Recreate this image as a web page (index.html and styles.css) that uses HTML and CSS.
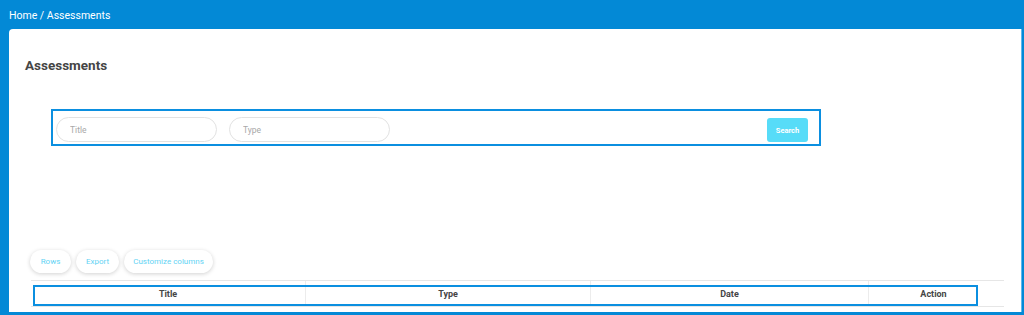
FILE: index.html
```html
<!DOCTYPE html>
<html>
<head>
<meta charset="utf-8">
<link rel="stylesheet" href="styles.css">
</head>
<body>
<div class="topbar">Home / Assessments</div>
<div class="card">
  <h1 class="title">Assessments</h1>
  <form class="search">
    <input class="field" type="text" placeholder="Title">
    <input class="field" type="text" placeholder="Type">
    <span class="spacer"></span>
    <button class="search-btn" type="button">Search</button>
  </form>
  <div class="toolbar">
    <button class="tool" type="button">Rows</button>
    <button class="tool" type="button">Export</button>
    <button class="tool" type="button">Customize columns</button>
  </div>
  <div class="table">
    <div class="thead">
      <div class="th c1">Title</div>
      <div class="th c2">Type</div>
      <div class="th c3">Date</div>
      <div class="th c4">Action</div>
    </div>
    <div class="highlight"></div>
  </div>
</div>
</body>
</html>
```

FILE: styles.css
```css
* { box-sizing: border-box; }
html, body { margin: 0; padding: 0; }
body {
  background: #0389d6;
  font-family: Roboto, "Liberation Sans", Arial, sans-serif;
  height: 315px;
  overflow: hidden;
}
.topbar {
  height: 29px;
  padding: 9px 0 0 9px;
  color: #ffffff;
  font-size: 10.5px;
  line-height: 13px;
}
.card {
  margin: 0 2px 0 9px;
  height: 283px;
  background: #ffffff;
  border-top-left-radius: 4px;
  border-right: 1px solid #5cb8ee;
  padding: 28px 0 0 0;
}
.title {
  margin: 0 0 0 16px;
  font-size: 13.5px;
  line-height: 17px;
  font-weight: 700;
  color: #454545;
}
.search {
  display: flex;
  align-items: flex-start;
  margin: 35px 0 0 42px;
  width: 770px;
  height: 37px;
  border: 2px solid #0b8fe0;
  padding: 6px 11px 0 3px;
}
.field {
  width: 161px;
  height: 25px;
  border: 1px solid #e2e2e2;
  border-radius: 13px;
  padding: 0 0 0 13px;
  font-family: inherit;
  font-size: 8.5px;
  color: #444;
  outline: none;
  margin-right: 12px;
  background: #fff;
}
.field::placeholder { color: #a8a8a8; }
.spacer { flex: 1; }
.search-btn {
  margin-top: 1px;
  width: 41px;
  height: 24px;
  border: none;
  border-radius: 3px;
  background: #57dcf8;
  color: #ffffff;
  font-family: inherit;
  font-size: 7.5px;
  font-weight: 700;
  padding: 0;
}
.toolbar {
  display: flex;
  gap: 5px;
  margin: 104px 0 0 21px;
  height: 23px;
}
.tool {
  height: 23px;
  border: none;
  border-radius: 12px;
  background: #ffffff;
  box-shadow: 0 1px 4px rgba(0,0,0,0.18);
  color: #63d3f4;
  font-family: inherit;
  font-size: 8px;
  padding: 0;
}
.tool:nth-child(1) { width: 41px; }
.tool:nth-child(2) { width: 43px; }
.tool:nth-child(3) { width: 89px; }
.table {
  position: relative;
  margin: 7px 0 0 22px;
  width: 973px;
}
.thead {
  display: grid;
  grid-template-columns: 275px 285px 278px 135px;
  border-top: 1px solid #e6e6e6;
  border-bottom: 1px solid #e6e6e6;
  height: 27px;
}
.th {
  display: flex;
  align-items: center;
  justify-content: center;
  font-size: 9px;
  font-weight: 700;
  color: #454545;
  padding-top: 1px;
  border-right: 1px solid #ececec;
}
.th.c4 { border-right: none; padding-right: 6px; }
.highlight {
  position: absolute;
  left: 2px;
  top: 5px;
  width: 945px;
  height: 21px;
  border: 2px solid #0b8fe0;
  pointer-events: none;
}
```
